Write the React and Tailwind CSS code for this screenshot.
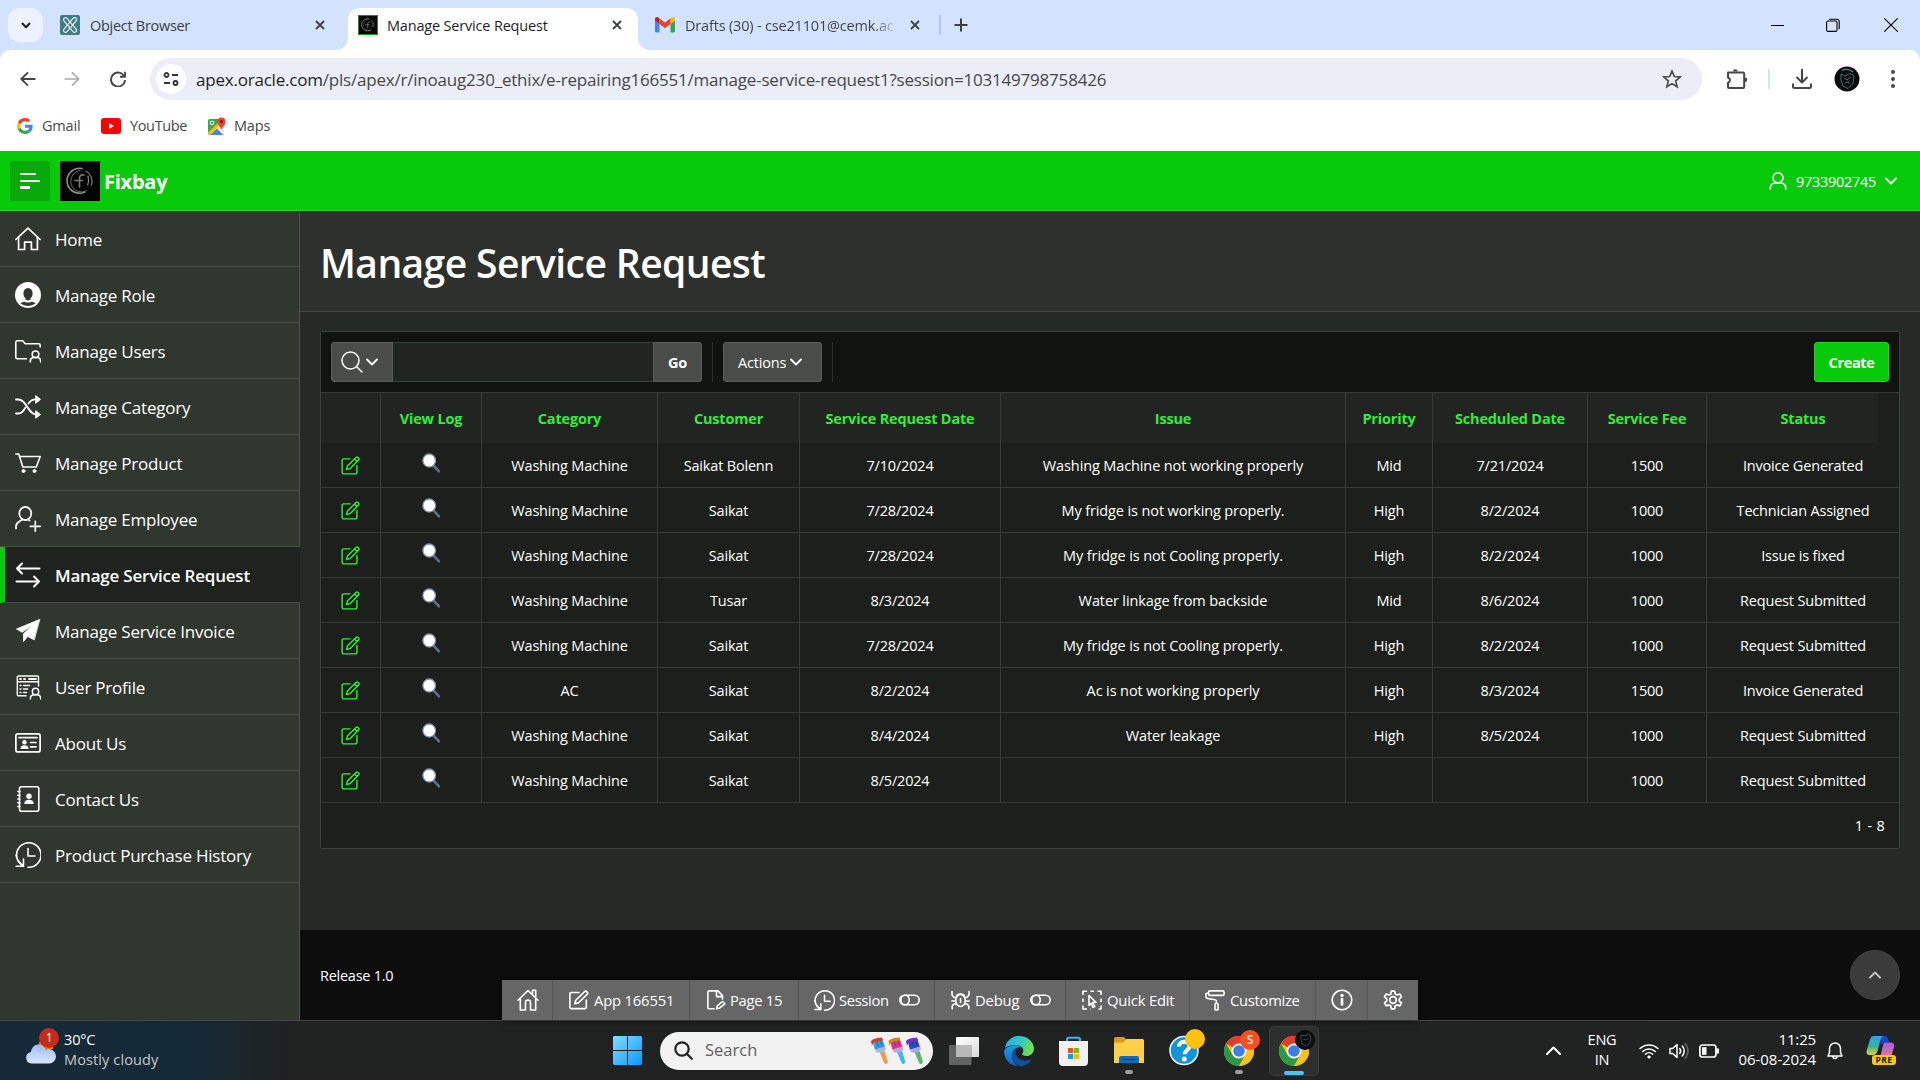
import React from 'react';

/* ---------- icon helper ---------- */
function Ico({ w = 24, h = w, vb, sw = 1.6, className = '', children }) {
  return (
    <svg
      width={w}
      height={h}
      viewBox={vb || `0 0 ${w} ${h}`}
      fill="none"
      stroke="currentColor"
      strokeWidth={sw}
      strokeLinecap="round"
      strokeLinejoin="round"
      className={`shrink-0 ${className}`}
    >
      {children}
    </svg>
  );
}

const Chevron = ({ className }) => (
  <Ico w={12} h={8} sw={1.8} className={className}><path d="M1 1.5l5 5 5-5" /></Ico>
);

/* ---------- sidebar icons, 26px box ---------- */
const navIcons = {
  home: (
    <Ico w={26} sw={1.7}>
      <path d="M.9 13.5L13 2.2l12.1 11.3" />
      <path d="M3.6 11.5V23.500h6V16.200h6.800v7.300h6v-12" />
    </Ico>
  ),
  role: (
    <Ico w={26}>
      <circle cx="13" cy="13" r="13" fill="currentColor" stroke="none" />
      <ellipse cx="13" cy="11.500" rx="4.600" ry="5.600" fill="#2f372e" stroke="none" />
      <path d="M10 16.500h6l.6 3.100 4.200 1.700a13 13 0 0 1-15.600 0l4.200-1.700z" fill="#2f372e" stroke="none" />
      <path d="M9 17.700c1 1.200 2.500 1.800 4 1.800s3-.6 4-1.800" stroke="#fff" strokeWidth="2.200" />
    </Ico>
  ),
  users: (
    <Ico w={26} sw={1.6}>
      <path d="M11.500 20.800H2.300a1.500 1.500 0 0 1-1.500-1.500V4.300a1.500 1.500 0 0 1 1.500-1.500h5.400l2.500 3h13.500a1.500 1.500 0 0 1 1.500 1.500V9" />
      <circle cx="20.500" cy="16.300" r="3.300" />
      <path d="M15.300 24v-1c0-1.800 1.500-3.300 3.300-3.500h3.800c1.800.2 3.300 1.700 3.300 3.500v1" />
    </Ico>
  ),
  category: (
    <Ico w={26} sw={1.8}>
      <path d="M1 5.500h2.500c8.500 0 9 15 18 15H23M1 19.500h2.500c3.500 0 5.300-3 7-6M13.500 9.500C15.300 7 17.300 5.400 20.500 5.400H23" />
      <path d="M21 1.800l4.500 3.600L21 9zM21 16.900l4.500 3.600L21 24z" fill="currentColor" strokeWidth="1" />
    </Ico>
  ),
  product: (
    <Ico w={26} sw={1.6}>
      <path d="M.8 4h3l4 13h13.500L25.200 6.500H4.700" />
      <circle cx="8.500" cy="21" r="1.500" fill="currentColor" strokeWidth="1" />
      <circle cx="19.500" cy="21" r="1.500" fill="currentColor" strokeWidth="1" />
    </Ico>
  ),
  employee: (
    <Ico w={26} sw={1.7}>
      <ellipse cx="10.300" cy="7.500" rx="6" ry="6.600" />
      <path d="M1 22.500v-2.200c0-2.900 2.300-4.200 6.300-6.800M13 13.600l1.500.9M20.300 15.300v10M15.300 20.300h10" />
    </Ico>
  ),
  request: (
    <Ico w={26} sw={2}>
      <path d="M24.500 6.500H2M7 1.500l-5 5 5 5M1.500 19.500H24M19 14.500l5 5-5 5" />
    </Ico>
  ),
  invoice: (
    <Ico w={26}>
      <path d="M24.500 1.500L1.500 11l5.700 3.300L18 6.500l-9.500 9.300V23.500l4.200-5 6.300 3.200z" fill="currentColor" stroke="currentColor" strokeWidth=".8" />
    </Ico>
  ),
  profile: (
    <Ico w={26} sw={1.4}>
      <path d="M11 21.800H3.300a1 1 0 0 1-1-1V3a1 1 0 0 1 1-1h19.200a1 1 0 0 1 1 1v9M2.500 7.800h21" />
      <path d="M5 5h1M9 5h1M14 5h7" strokeWidth="1.800" />
      <path d="M5 11.500h1M5 15h1M5 18.500h1M8.500 11.500h6M8.500 15h4M8.500 18.500h3" />
      <circle cx="20.500" cy="17.500" r="3.200" />
      <path d="M15.400 25v-1c0-1.700 1.400-3.100 3.200-3.300h3.800c1.800.2 3.200 1.600 3.200 3.300v1" />
    </Ico>
  ),
  about: (
    <Ico w={26} sw={1.7}>
      <rect x=".9" y="3.900" width="24.200" height="18" rx="2" />
      <path d="M4 7.600h18" />
      <circle cx="9.500" cy="12.300" r="2.200" fill="currentColor" stroke="none" />
      <path d="M5.500 19c0-3 1.500-3.800 4-3.800s4 .8 4 3.800z" fill="currentColor" stroke="none" />
      <path d="M15.500 12.500h5.500M15.500 16.800h5.500" />
    </Ico>
  ),
  contact: (
    <Ico w={26} sw={1.6}>
      <rect x="4.500" y=".8" width="19.300" height="24.400" rx="2" />
      <path d="M2.800 5.500h2M2.800 9.200h2M2.800 13h2M2.800 16.800h2M2.800 20.500h2" />
      <circle cx="14" cy="10.300" r="2.700" fill="currentColor" stroke="none" />
      <path d="M9.300 18c0-3 1.800-4.200 4.700-4.200s4.700 1.200 4.700 4.200z" fill="currentColor" stroke="none" />
    </Ico>
  ),
  history: (
    <Ico w={26} sw={1.6}>
      <path d="M6.500 22.800A12.200 12.200 0 1 1 13 25.200M13 6.500V14h7M8.500 17v7.200H1.200M8 23.500C3 20 1.500 16 1 13" />
    </Ico>
  ),
};

const navItems = [
  ['home', 'Home'],
  ['role', 'Manage Role'],
  ['users', 'Manage Users'],
  ['category', 'Manage Category'],
  ['product', 'Manage Product'],
  ['employee', 'Manage Employee'],
  ['request', 'Manage Service Request'],
  ['invoice', 'Manage Service Invoice'],
  ['profile', 'User Profile'],
  ['about', 'About Us'],
  ['contact', 'Contact Us'],
  ['history', 'Product Purchase History'],
];

/* ---------- browser chrome ---------- */
const CloseX = () => (
  <Ico w={10} sw={1.8} className="text-[#3c4043]"><path d="M1 1l8 8M9 1l-8 8" strokeLinecap="butt" /></Ico>
);

function FixLogo({ size, frame }) {
  return (
    <svg width={size} height={size} viewBox="0 0 40 40" className="shrink-0">
      <rect width="40" height="40" fill="#020302" />
      {frame && <rect x="1" y="1" width="38" height="38" fill="none" stroke="#1c8f1c" strokeWidth="2" />}
      <g fill="none" stroke="#8b9a80" strokeLinecap="round">
        <path d="M22 7.500A12.500 12.500 0 1 0 25 31" strokeWidth="1.500" />
        <path d="M20 9.500A10.800 10.800 0 1 0 27 29.500" strokeWidth="1" stroke="#65745c" />
        <path d="M26 10A12 12 0 0 1 31.500 24" strokeWidth="1.400" stroke="#66775b" />
        <path d="M28 15c.8 3 .8 6-.3 9" strokeWidth="1.100" />
        <path d="M24 14c-3-.6-4.500.5-4.500 3.500V26M15 19.500h7.500" strokeWidth="1.700" stroke="#6c8062" />
      </g>
    </svg>
  );
}

const GmailIcon = () => (
  <svg width="20" height="16" viewBox="0 0 20 16" className="shrink-0">
    <path d="M0 2.500v11.800c0 .7.600 1.200 1.300 1.200h3.200V7z" fill="#4285f4" />
    <path d="M20 2.500v11.800c0 .7-.6 1.200-1.300 1.200h-3.200V7z" fill="#34a853" />
    <path d="M15.500 1.500V7L20 3.800V2.200C20 .3 18-.6 16.500.6z" fill="#fbbc04" />
    <path d="M4.500 7V1.400L10 5.500l5.500-4.100V7L10 11.200z" fill="#ea4335" />
    <path d="M0 2.200v1.600L4.500 7V1.400L3.500.6C2-.6 0 .3 0 2.200z" fill="#c5221f" />
  </svg>
);

function TabStrip() {
  return (
    <div className="flex h-[50px] items-start bg-[#d3e3fd] text-[14.5px] text-[#3c4043]">
      <div className="mt-2 ml-2 flex h-[34px] w-[35px] items-center justify-center rounded-xl bg-[#ecf3fe] text-[#1f1f1f]">
        <Ico w={10} h={7} sw={2}><path d="M1 1l4 4.300L9 1" strokeLinecap="butt" /></Ico>
      </div>
      <div className="flex h-[50px] w-[305px] items-center pl-[17px]">
        <svg width="20" height="20" viewBox="0 0 20 20" className="shrink-0">
          <rect width="20" height="20" rx="2" fill="#427c83" />
          <g fill="none" stroke="#e4f0f0" strokeWidth="1.200">
            <rect x="8" y="1" width="4" height="18" rx="2" transform="rotate(40 10 10)" />
            <rect x="8" y="1" width="4" height="18" rx="2" transform="rotate(-40 10 10)" />
          </g>
        </svg>
        <span className="ml-[10px] w-[225px] pt-[2px] tracking-[-0.02em]!">Object Browser</span>
        <CloseX />
      </div>
      <div className="relative mt-2 flex h-[42px] w-[290px] items-center rounded-t-[12px] bg-white pb-2 pl-[10px] text-[#1f1f1f]">
        <svg width="12" height="12" className="absolute bottom-0 -left-3"><path d="M12 0v12H0A12 12 0 0 0 12 0z" fill="#fff" /></svg>
        <svg width="12" height="12" className="absolute -right-3 bottom-0"><path d="M0 0v12h12A12 12 0 0 1 0 0z" fill="#fff" /></svg>
        <FixLogo size={20} frame />
        <span className="ml-[9px] w-[225px] pt-[2px]">Manage Service Request</span>
        <CloseX />
      </div>
      <div className="flex h-[50px] grow items-center pl-[17px]">
        <GmailIcon />
        <span className="ml-[10px] w-[210px] bg-[linear-gradient(to_right,#3c4043_90%,#c3d3ec)] bg-clip-text pt-[2px] whitespace-nowrap text-transparent">Drafts (30) - cse21101@cemk.ac</span>
        <span className="ml-[15px]"><CloseX /></span>
        <span className="ml-[19px] h-5 w-[2px] bg-[#a8c7fa]" />
        <Ico w={14} sw={2} className="ml-[13px]"><path d="M7 .5v13M.5 7h13" strokeLinecap="butt" /></Ico>
      </div>
      <div className="flex h-[50px] w-[149px] items-center text-black">
        <span className="h-px w-[13px] bg-black" />
        <Ico w={14} sw={1.1} className="ml-[42px]">
          <rect x=".6" y="3" width="10.400" height="10.400" rx="1.500" />
          <path d="M3.500 1.200h7.500a2.200 2.200 0 0 1 2.200 2.200v7.400" />
        </Ico>
        <Ico w={14} sw={1.1} className="ml-[44px]"><path d="M.6.600l12.800 12.800M13.400.600L.6 13.400" /></Ico>
      </div>
    </div>
  );
}

function UrlBar() {
  return (
    <div className="bg-[#d3e3fd]">
      <div className="flex h-[58px] items-center rounded-t-[10px] bg-white text-[#474747]">
        <Ico w={16} sw={1.9} className="ml-5"><path d="M15.500 8H1.500M8 1.300L1.300 8 8 14.700" strokeLinecap="butt" /></Ico>
        <Ico w={16} sw={1.7} className="ml-7 text-[#a9a9a9]"><path d="M.5 8h14M8 1.300L14.700 8 8 14.700" strokeLinecap="butt" /></Ico>
        <Ico w={16} sw={1.9} className="ml-[30px]"><path d="M14.300 5.500A7 7 0 1 0 15 9M15 .8v5h-5" strokeLinecap="butt" /></Ico>
        <div className="ml-[24px] flex h-[42px] w-[1552px] items-center rounded-full bg-[#ebeef7] pl-[6px] text-[#474747]">
          <div className="flex size-[30px] items-center justify-center rounded-full bg-white">
            <Ico w={16} h={14} sw={1.8} className="text-[#333]">
              <circle cx="3.500" cy="3" r="2" /><path d="M9 3h6M1 11h6" strokeLinecap="butt" /><circle cx="12.500" cy="11" r="2" />
            </Ico>
          </div>
          <span className="ml-[10px] grow pt-[2px] text-[17px] tracking-[-0.012em]!">
            <span className="text-[#1f1f1f]">apex.oracle.com</span>/pls/apex/r/inoaug230_ethix/e-repairing166551/manage-service-request1?session=103149798758426
          </span>
          <Ico w={20} sw={1.6} className="mr-[20px]">
            <path d="M10 2l2.300 5.500 5.900.5-4.500 3.900 1.400 5.800L10 14.600l-5.100 3.100 1.400-5.800L1.800 8l5.900-.5z" strokeLinejoin="miter" />
          </Ico>
        </div>
        <Ico w={22} sw={2} className="ml-[24px]">
          <path d="M2 4.500h5.500M11.500 4.500H17a1.200 1.200 0 0 1 1.200 1.200V19a1 1 0 0 1-1 1H3a1 1 0 0 1-1-1v-4.200l1-.7a2.500 2.500 0 0 0 0-4l-1-.7V5.500a1 1 0 0 1 1-1z" />
          <path d="M7 3.600a2.300 2.300 0 0 1 4.600 0zM19 9.500a2.300 2.300 0 0 1 0 4.600z" fill="currentColor" stroke="none" />
        </Ico>
        <span className="ml-[20px] h-5 w-[2px] bg-[#d3e3fd]" />
        <Ico w={20} sw={2} className="ml-[22px]"><path d="M10 0v12.500M4.500 8l5.500 5.500L15.500 8M1 14.500v3A1.500 1.500 0 0 0 2.500 19h15a1.500 1.500 0 0 0 1.500-1.500v-3" strokeLinecap="butt" /></Ico>
        <svg width="26" height="26" viewBox="0 0 26 26" className="ml-[22px]">
          <circle cx="13" cy="13" r="12.500" fill="#0b0c0e" />
          <path d="M8 4.500c3-2 8-1.500 11 1.500" stroke="#2b9aa0" strokeWidth="1.300" fill="none" />
          <path d="M7 8l4 2 5-2.500 4 2-1 8-5 5-5-2.500L7 14zM10 12l3 2 4-3M11 17l3-1 2 2" stroke="#4b6b74" strokeWidth="1" fill="none" />
        </svg>
        <svg width="4" height="18" className="ml-[31px]" fill="#474747"><circle cx="2" cy="2" r="2" /><circle cx="2" cy="9" r="2" /><circle cx="2" cy="16" r="2" /></svg>
      </div>
    </div>
  );
}

function Bookmarks() {
  return (
    <div className="flex h-[43px] items-center bg-white pb-[7px] text-[14.5px] text-[#474747]">
      <svg width="16" height="16" viewBox="0 0 48 48" className="ml-[17px]">
        <path fill="#EA4335" d="M24 9.500c3.540 0 6.710 1.220 9.210 3.600l6.850-6.850C35.900 2.380 30.470 0 24 0 14.620 0 6.510 5.380 2.560 13.220l7.980 6.190C12.430 13.720 17.740 9.500 24 9.500z" />
        <path fill="#4285F4" d="M46.980 24.550c0-1.570-.15-3.090-.38-4.550H24v9.020h12.940c-.58 2.960-2.260 5.480-4.780 7.180l7.730 6c4.510-4.180 7.090-10.360 7.090-17.650z" />
        <path fill="#FBBC05" d="M10.530 28.590c-.48-1.450-.76-2.990-.76-4.590s.27-3.140.76-4.590l-7.980-6.190C.92 16.460 0 20.120 0 24c0 3.880.92 7.540 2.560 10.780l7.970-6.190z" />
        <path fill="#34A853" d="M24 48c6.480 0 11.930-2.130 15.890-5.810l-7.730-6c-2.150 1.450-4.920 2.300-8.160 2.300-6.260 0-11.570-4.220-13.470-9.910l-7.980 6.190C6.510 42.620 14.620 48 24 48z" />
      </svg>
      <span className="ml-[9px] w-[59px]">Gmail</span>
      <svg width="20" height="16" viewBox="0 0 20 16"><rect width="20" height="16" rx="3" fill="#f00" /><path d="M8 5l5 3-5 3z" fill="#fff" /></svg>
      <span className="ml-[9px] w-[78px] tracking-[-0.025em]!">YouTube</span>
      <svg width="19" height="19" viewBox="0 0 19 19">
        <rect x="0" y="2" width="16" height="16" rx="2" fill="#34a853" />
        <path d="M0 18L16 3v13a2 2 0 0 1-2 2z" fill="#e8eaed" />
        <path d="M2 18l7-6.500 6 6.500z" fill="#4285f4" />
        <path d="M0 15.500L13 3l2 2L2 18H0z" fill="#fbbc04" />
        <circle cx="4" cy="6" r="1.800" fill="none" stroke="#fff" />
        <path d="M13.500 13c-.5-3-4-4.500-4-8.500a4 4 0 0 1 8 0c0 4-3.500 5.500-4 8.500z" fill="#ea4335" />
        <circle cx="13.500" cy="4.500" r="1.500" fill="#7e1c14" />
      </svg>
      <span className="ml-[7px]">Maps</span>
    </div>
  );
}

/* ---------- application ---------- */
function AppHeader() {
  return (
    <header className="flex h-[60px] items-center border-b border-[#2bd02e] bg-[#06ca0a] text-white">
      <div className="ml-[10px] flex size-10 items-center justify-center rounded-[3px] bg-[#09a90c]">
        <Ico w={20} h={16} sw={2}><path d="M0 1h16M0 8h20" strokeLinecap="butt" /><path d="M0 14.500h10" strokeWidth="3" strokeLinecap="butt" /></Ico>
      </div>
      <div className="ml-[10px]"><FixLogo size={40} /></div>
      <span className="ml-[4px] grow pt-[3px] text-[20px] font-bold">Fixbay</span>
      <Ico w={18} h={19} sw={1.600}><circle cx="9" cy="6.800" r="5" /><path d="M1.300 18v-1.200c0-2.500 2-4.300 4.500-4.800h6.400c2.500.5 4.500 2.300 4.500 4.800V18" /></Ico>
      <span className="ml-[9px] w-[80px] pt-[2px] text-[14.500px] tracking-[-0.02em]! whitespace-nowrap">9733902745</span>
      <Chevron className="mr-[23px] ml-[9px]" />
    </header>
  );
}

function Sidebar() {
  return (
    <nav className="w-[300px] shrink-0 border-r border-[#4a524a] bg-[#2f372e] text-[17px] text-white">
      {navItems.map(([icon, label]) => {
        const active = icon === 'request';
        return (
          <div
            key={icon}
            className={
              active
                ? '-mr-px flex h-14 items-center border-b border-l-[5px] border-b-[#464d46] border-l-[#06ca0a] bg-[#1e231f] pl-[9.5px] font-semibold'
                : 'flex h-14 items-center border-b border-[#464d46] pl-[14.5px]'
            }
          >
            {navIcons[icon]}
            <span className="ml-[14.5px] pt-[3px] whitespace-nowrap">{label}</span>
          </div>
        );
      })}
    </nav>
  );
}

const columns = [
  ['', 60], ['View Log', 101], ['Category', 176], ['Customer', 142], ['Service Request Date', 201],
  ['Issue', 345], ['Priority', 87], ['Scheduled Date', 155], ['Service Fee', 119], ['Status', 192],
];
const WM = 'Washing Machine';
const rows = [
  [WM, 'Saikat Bolenn', '7/10/2024', 'Washing Machine not working properly', 'Mid', '7/21/2024', '1500', 'Invoice Generated'],
  [WM, 'Saikat', '7/28/2024', 'My fridge is not working properly.', 'High', '8/2/2024', '1000', 'Technician Assigned'],
  [WM, 'Saikat', '7/28/2024', 'My fridge is not Cooling properly.', 'High', '8/2/2024', '1000', 'Issue is fixed'],
  [WM, 'Tusar', '8/3/2024', 'Water linkage from backside', 'Mid', '8/6/2024', '1000', 'Request Submitted'],
  [WM, 'Saikat', '7/28/2024', 'My fridge is not Cooling properly.', 'High', '8/2/2024', '1000', 'Request Submitted'],
  ['AC', 'Saikat', '8/2/2024', 'Ac is not working properly', 'High', '8/3/2024', '1500', 'Invoice Generated'],
  [WM, 'Saikat', '8/4/2024', 'Water leakage', 'High', '8/5/2024', '1000', 'Request Submitted'],
  [WM, 'Saikat', '8/5/2024', '', '', '', '1000', 'Request Submitted'],
];

const EditIcon = () => (
  <Ico w={19} vb="0 0 20 20" sw={1.5} className="mx-auto text-[#2ff035]">
    <path d="M9.500 3H2.800A1.600 1.600 0 0 0 1.200 4.600v12.600a1.600 1.600 0 0 0 1.600 1.600h12.400a1.600 1.600 0 0 0 1.600-1.600V10" />
    <path d="M5.800 14.200l1-3.600 9-9a1.500 1.500 0 0 1 2.100 0l.6.600a1.500 1.500 0 0 1 0 2.100l-9 9zM14.300 3.200l2.600 2.600" />
  </Ico>
);
const LensIcon = () => (
  <svg width="18" height="20" viewBox="0 0 18 20" className="mx-auto -mt-[4px]">
    <path d="M11 12l6 6.300" stroke="#5f6f86" strokeWidth="2.600" strokeLinecap="round" />
    <ellipse cx="7.200" cy="7.500" rx="6.300" ry="6.500" fill="#fdfeff" stroke="#8697ad" strokeWidth="1.300" />
  </svg>
);

function ReportToolbar() {
  return (
    <div className="flex h-[60px] items-center bg-[#111310] px-[10px] text-[14.5px] text-white">
      <div className="flex h-10 w-[62px] items-center rounded-l-[3px] border border-[#5b5d5a] bg-[#4a4c49] pl-[9px]">
        <Ico w={22} sw={1.5}><circle cx="9.500" cy="9.500" r="8.500" /><path d="M15.700 15.700l5.300 5.300" /></Ico>
        <Chevron className="ml-[3px]" />
      </div>
      <div className="h-10 w-[260px] border-y border-[#3d413d] bg-[#212521]" />
      <div className="flex h-10 w-[49px] items-center justify-center rounded-r-[3px] border border-[#5b5d5a] bg-[#4a4c49] pt-[2px] font-bold">Go</div>
      <span className="ml-[10px] h-10 w-px bg-[#2c2e2b]" />
      <div className="ml-[10px] flex h-10 w-[99px] items-center rounded-[3px] border border-[#5b5d5a] bg-[#4a4c49] pl-[14px]">
        <span className="pt-[2px]">Actions</span><Chevron className="ml-[4px]" />
      </div>
      <span className="ml-[10px] h-10 w-px bg-[#2c2e2b]" />
      <div className="ml-auto flex h-10 w-[75px] items-center justify-center rounded-[3px] border border-[#25d029] bg-[#06ca0a] pt-[2px] font-bold tracking-[-0.025em]!">Create</div>
    </div>
  );
}

function Report() {
  return (
    <section className="mx-5 mt-[19px] rounded-[2px] border border-[#3c403c] bg-[#1d1f1c] text-[14.5px] text-white">
      <ReportToolbar />
      <table className="w-full table-fixed border-separate border-spacing-0 border-t border-[#363a36] text-center">
        <colgroup>{columns.map(([c, w]) => <col key={w} style={{ width: w }} />)}</colgroup>
        <thead>
          <tr className="h-[50px] text-[#2ff035]">
            {columns.map(([c], i) => (
              <th
                key={i}
                className={
                  i === 9
                    ? 'bg-[linear-gradient(to_right,#222421_171px,transparent_171px)] p-0 pt-[2px] font-bold'
                    : 'border-r border-[#373a36] bg-[#222421] p-0 pt-[2px] font-bold whitespace-nowrap'
                }
              >
                {c}
              </th>
            ))}
          </tr>
        </thead>
        <tbody>
          {rows.map((r, ri) => (
            <tr key={ri} className="h-[45px]">
              <td className="border-r border-b border-[#373a36] p-0 pr-px"><EditIcon /></td>
              <td className="border-r border-b border-[#373a36] p-0"><LensIcon /></td>
              {r.map((c, i) => (
                <td
                  key={i}
                  className={
                    i === 3
                      ? 'border-r border-b border-[#373a36] p-0 pt-[2px] tracking-[-0.008em]! whitespace-nowrap'
                      : 'border-r border-b border-[#373a36] p-0 pt-[2px] whitespace-nowrap last:border-r-0'
                  }
                >
                  {c}
                </td>
              ))}
            </tr>
          ))}
        </tbody>
      </table>
      <div className="flex h-[45px] items-center justify-end pr-[14px]">
        <span className="tracking-[0.02em]!">1 - 8</span>
      </div>
    </section>
  );
}

const Toggle = () => (
  <Ico w={21} h={12} sw={1.6} className="ml-auto"><rect x=".8" y="1.200" width="19.400" height="9.600" rx="4.800" /><ellipse cx="6" cy="6" rx="4.200" ry="4.800" /></Ico>
);

function DevToolbar() {
  const cell = 'flex h-10 items-center border-r border-[#575757] whitespace-nowrap';
  return (
    <div className="absolute bottom-0 left-[202px] flex h-10 bg-[#666] text-[14.8px] text-white shadow-[0_0_8px_rgba(0,0,0,0.6)]">
      <div className={`${cell} w-[51px] pl-[14.5px]`}>
        <Ico w={22}><path d="M1 11.300L11 1.500l10 9.800M3.300 10v11h5.200v-7.500a2.500 2.500 0 0 1 5 0V21h5.200V10M15.500 5V1.300h3.200V8" /></Ico>
      </div>
      <div className={`${cell} w-[137px] pl-[16px]`}>
        <Ico w={20}><path d="M10 2.500H2.200A1.300 1.300 0 0 0 .9 3.800v13.500a1.300 1.300 0 0 0 1.300 1.300H16a1.300 1.300 0 0 0 1.300-1.300V10" /><path d="M5.800 13.800l1-3.600 8.800-8.600a1.500 1.500 0 0 1 2.100 0l.5.500a1.500 1.500 0 0 1 0 2.100l-8.800 8.700z" /></Ico>
        <span className="ml-[5px]">App 166551</span>
      </div>
      <div className={`${cell} w-[109px] pl-[17px]`}>
        <Ico w={19} h={20}><path d="M7 18.800H2.200a1.300 1.300 0 0 1-1.300-1.300V2.200A1.300 1.300 0 0 1 2.200.9H11l4.500 4.700V9M9.500 1v5.600h5.700" /><path d="M9.500 18.800l.8-3 5.200-4.300 2.300 2.300-5.300 4.400z" /></Ico>
        <span className="ml-[4px] tracking-[-0.02em]!">Page 15</span>
      </div>
      <div className={`${cell} w-[136px] pr-[14px] pl-[15px]`}>
        <Ico w={21} vb="0 0 26 26" sw={1.9}><path d="M6.500 22.800A12 12 0 1 1 13 25M13 6.500V14h7M8.500 17v7.200H1.200M8 23.500C3 20 1.500 16 1 13" /></Ico>
        <span className="ml-[4px] tracking-[-0.025em]!">Session</span>
        <Toggle />
      </div>
      <div className={`${cell} w-[131px] pr-[14px] pl-[16px]`}>
        <Ico w={19} h={20}>
          <ellipse cx="9.500" cy="10.500" rx="4.800" ry="6" />
          <path d="M5.500 6.800C5.500 3 13.500 3 13.500 6.800M9.500 8.500v4M5 7.500H3.200L1 5V1.500M14 7.500h1.800L18 5V1.500M4.600 11H.8M14.400 11h3.800M5.300 14H3l-1.800 2v2.800M13.700 14H16l1.800 2v2.800" />
        </Ico>
        <span className="ml-[5px]">Debug</span>
        <Toggle />
      </div>
      <div className={`${cell} w-[124px] pl-[16px]`}>
        <Ico w={20}>
          <path d="M1 5V1.200h4M8.500 1.200h3.500M15.500 1.200H19V5M1 8.500V12M1 15.500V19h4M19 8.500V12M19 15.500V19h-2.500M8.500 19H9" strokeLinecap="butt" />
          <path d="M7 5.500l7 6.800h-3.200l2 4.200-1.800.8-1.800-4L7 15.500z" />
        </Ico>
        <span className="ml-[5px]">Quick Edit</span>
      </div>
      <div className={`${cell} w-[126px] pl-[15px]`}>
        <Ico w={20} h={21}><rect x="3.500" y=".9" width="15.600" height="4.500" rx="1.500" /><path d="M3.500 3.200H2A1.200 1.200 0 0 0 .9 4.500v2.200c0 1 .5 1.500 1.500 1.700l7.600 1.400c.9.200 1.400.7 1.400 1.600v1.600" /><rect x="10" y="13.500" width="3" height="6.500" rx=".8" /></Ico>
        <span className="ml-[5px] tracking-[-0.02em]!">Customize</span>
      </div>
      <div className={`${cell} w-[52px] justify-center`}>
        <Ico w={22}><circle cx="11" cy="11" r="9.800" /><path d="M11 10v5.500" strokeWidth="2.600" /><circle cx="11" cy="6.500" r=".9" fill="currentColor" /></Ico>
      </div>
      <div className="flex h-10 w-[50px] items-center justify-center">
        <Ico w={22} vb="1 1 22 22" sw={1.7}>
          <path d="M10.300 2.500h3.400l.5 2.800 1.900 1.100 2.700-1 1.700 2.900-2.200 1.900v2.300l2.200 1.900-1.700 2.900-2.700-1-1.900 1.100-.5 2.800h-3.400l-.5-2.800-1.900-1.100-2.700 1-1.700-2.900 2.200-1.900v-2.300L3.500 8.300l1.700-2.900 2.700 1 1.900-1.100z" transform="translate(0 .6)" />
          <circle cx="12" cy="12" r="3.300" />
        </Ico>
      </div>
    </div>
  );
}

function Main() {
  return (
    <main className="relative flex grow flex-col bg-[#252a26]">
      <div className="flex h-[101px] items-center border-b border-[#424642] bg-[#2d302c] pl-5">
        <h1 className="pt-[4px] text-[39px] font-semibold tracking-[-0.015em]! text-white">Manage Service Request</h1>
      </div>
      <Report />
      <footer className="mt-auto flex h-[90px] items-center justify-between bg-[#0d0d0d] pr-5 pl-5 text-[14.5px] text-white">
        <span className="pt-px tracking-[-0.018em]!">Release 1.0</span>
        <span className="flex size-[50px] items-center justify-center rounded-full border border-[#454545] bg-[#3b3b3b] text-[#c4c4c4]">
          <Ico w={12} h={8} sw={1.8}><path d="M1 6.500l5-5 5 5" /></Ico>
        </span>
      </footer>
      <DevToolbar />
    </main>
  );
}

/* ---------- Windows taskbar ---------- */
const Chrome = () => (
  <svg width="30" height="30" viewBox="0 0 30 30">
    <circle cx="15" cy="15" r="15" fill="#fbc116" />
    <path d="M15 15L2 7.500A15 15 0 0 1 28 7.500H15z" fill="#e33b2e" />
    <path d="M2 7.500A15 15 0 0 0 15 30l6.500-11.300L15 15 8.500 18.700z" fill="#2a9a47" />
    <path d="M15 7.500h13A15 15 0 0 1 15 30l6.500-11.300z" fill="#fbc116" />
    <circle cx="15" cy="15" r="7.500" fill="#fff" />
    <circle cx="15" cy="15" r="5.800" fill="#3b7ded" />
  </svg>
);

const brush = (x, tip, band, handle, drip) => (
  <g transform={`translate(${x} 0)`}>
    <path d="M8.500 15l5-1 3.300 10.500a2 2 0 0 1-3.600 1.500z" fill={handle} />
    <path d="M1.500 3.500L11 1l3 9-10 3z" fill={tip} />
    <path d="M4 12.500L14 9.500l.8 3.200L11 15.500l-5.500 0z" fill={band} />
    <path d="M0 4C3 1 7 1 11 .5l.8 2.700L2.500 5.500 1 9z" fill={drip} />
    <path d="M6 4.500l1.500 5M9.500 3.500l1.500 5" stroke="#1b2a6b" strokeOpacity=".5" strokeWidth=".9" />
  </g>
);

function Taskbar() {
  return (
    <div className="flex h-[60px] items-center border-t border-[#434546] bg-[linear-gradient(to_right,#172937_0px,#142a38_190px,#202222_285px,#212222_100%)] text-white">
      <div className="relative ml-[25px] h-[60px] w-[39px]">
        <svg width="32" height="22" viewBox="0 0 32 22" className="absolute top-[21px] left-0">
          <defs><linearGradient id="cloud" x1="0" y1="0" x2="0" y2="1"><stop offset="0" stopColor="#9dbcf5" /><stop offset="1" stopColor="#dbe8fb" /></linearGradient></defs>
          <path d="M14 0h14v7H14z" fill="#f57c14" />
          <path d="M6.500 21.500a5.800 5.800 0 0 1-.5-11.500C6.500 5 10 2.500 13.500 2.500c3.300 0 6 2 7 5 1-.5 2-.7 3-.5a7.200 7.200 0 0 1 .5 14.500z" fill="url(#cloud)" />
        </svg>
        <span className="absolute top-[7px] left-[14px] flex size-5 items-center justify-center rounded-full bg-[#c42b1c] text-[12px]">1</span>
      </div>
      <div className="w-[549px] pb-[2px] text-[14.500px] leading-5">
        <div className="tracking-[-0.01em]!">30°C</div>
        <div className="tracking-[0.008em]! text-[#c6c9cb]">Mostly cloudy</div>
      </div>
      <svg width="29" height="29" viewBox="0 0 29 29">
        <defs><linearGradient id="win" x1="0" y1="0" x2="1" y2="1"><stop offset="0" stopColor="#84dcff" /><stop offset="1" stopColor="#0a98fb" /></linearGradient></defs>
        <path d="M1 0h13v14H0V1zM15 0h13l1 1v13H15zM0 15h14v14H1l-1-1zM15 15h14v13l-1 1H15z" fill="url(#win)" />
      </svg>
      <div className="ml-[18px] flex h-[38px] w-[273px] items-center rounded-full bg-[#f2f2f2] pl-[14px]">
        <Ico w={19} sw={2.2} className="text-[#222]"><circle cx="8" cy="8" r="6.700" /><path d="M12.800 12.800l5 5" /></Ico>
        <span className="ml-[12px] w-[166px] text-[16.500px] tracking-[0]! text-[#5f5f5f]">Search</span>
        <svg width="54" height="28" viewBox="0 0 54 28">
          {brush(0, '#2a9fe0', '#a9b6f2', '#f2994a', '#d93a2b')}
          {brush(17.5, '#e0348c', '#b9a6ee', '#3fb8ee', '#c98a1a')}
          {brush(35, '#2150bb', '#a9a6ee', '#58b86a', '#7a2fc0')}
        </svg>
      </div>
      <svg width="31" height="28" viewBox="0 0 31 28" className="ml-[16px]">
        <defs><linearGradient id="tv" x1="0" y1="0" x2="1" y2="1"><stop offset="0" stopColor="#fff" /><stop offset="1" stopColor="#dadada" /></linearGradient></defs>
        <rect x="7" y="0" width="23" height="20" rx="1" fill="url(#tv)" />
        <rect x="0" y="8" width="22.500" height="20" rx="1" fill="#6f6f6f" fillOpacity=".85" />
        <rect x="7" y="8" width="15.500" height="12" fill="#b9b9b9" />
      </svg>
      <svg width="30" height="30" viewBox="0 0 30 30" className="ml-[24px]">
        <defs>
          <linearGradient id="eg1" x1="0" y1="0" x2="1" y2=".3"><stop offset="0" stopColor="#2aa9ea" /><stop offset=".6" stopColor="#36c8c0" /><stop offset="1" stopColor="#6fe04a" /></linearGradient>
          <linearGradient id="eg2" x1="0" y1="0" x2="0" y2="1"><stop offset="0" stopColor="#1b9de2" /><stop offset="1" stopColor="#0a62c9" /></linearGradient>
        </defs>
        <path d="M1 12C2 5 8 0 15 0c9 0 15 6.500 15 12.500 0 5-4 7.500-7.500 7.500-3 0-4.500-1-4.500-1.700 0-.8 1.300-1.300 1.300-3.600 0-3-3-5.700-7-5.700C7 9 3 10 1 12z" fill="url(#eg1)" />
        <path d="M12.500 9C6 9 .3 12 .1 15.500.1 23 6 30 14 30c-4-2-6-6-6-10 0-4.500 2-6.500 4.500-8 1.300-.8 3.300-1.200 4.800-.3-.8-1.500-2.500-2.700-4.800-2.700z" fill="url(#eg2)" />
        <path d="M12 13c-2.500 1.500-4 4-4 7 0 5 4 10 9 10 4 0 8-2.500 10.300-6 .4-.7-.2-1-.8-.7-1.500.8-3.300 1.200-5 1.200-6 0-10-4-10-8.500 0-1 .2-2.200.5-3z" fill="#124e9c" />
      </svg>
      <svg width="29" height="30" viewBox="0 0 29 30" className="ml-[25px]">
        <path d="M8 6V3.200C8 2 9 1.700 9.500 1.700h10c.5 0 1.500.3 1.500 1.500V6" stroke="#37b5f5" strokeWidth="2" fill="none" />
        <path d="M0 5h29v21a4 4 0 0 1-4 4H4a4 4 0 0 1-4-4z" fill="#f1f1f2" />
        <path d="M9 12h5v5H9z" fill="#f25022" /><path d="M15 12h5v5h-5z" fill="#7fba00" /><path d="M9 18h5v5H9z" fill="#00a4ef" /><path d="M15 18h5v5h-5z" fill="#ffb900" />
      </svg>
      <div className="relative ml-[26px] flex h-[60px] w-[30px] items-center">
        <svg width="30" height="27" viewBox="0 0 30 27">
          <path d="M0 1.500A1.500 1.500 0 0 1 1.500 0H10l3 3.500L10 6H0z" fill="#d99a0c" />
          <path d="M0 5.500h9L12.500 2H28.500A1.500 1.500 0 0 1 30 3.500V26H0z" fill="#ffcf48" />
          <path d="M5 26v-5a2 2 0 0 1 2-2h16a2 2 0 0 1 2 2v5z" fill="#0f6cbd" /><path d="M8.500 22.500h13" stroke="#083f77" strokeWidth="1.200" />
        </svg>
        <span className="absolute top-[49px] left-[11px] h-1 w-2 rounded-full bg-[#9a9a9a]" />
      </div>
      <svg width="37" height="37" viewBox="0 0 37 37" className="mb-[6px] ml-[25px]">
        <circle cx="15" cy="21.500" r="14" fill="#1194d8" stroke="#e8f4fa" strokeWidth="1.600" />
        <path d="M10 17.500c0-3 2.300-4.800 5.200-4.800s5.300 1.700 5.300 4.500c0 4-5 4-5 8" fill="none" stroke="#fff" strokeWidth="4" />
        <circle cx="15.300" cy="30" r="2.500" fill="#fff" />
        <circle cx="26" cy="10" r="10" fill="#ffc20e" />
      </svg>
      <div className="relative ml-[18px] flex h-[60px] w-[30px] items-center">
        <Chrome />
        <span className="absolute top-[9px] left-[16px] flex size-5 items-center justify-center rounded-full bg-[#f4511e] text-[12px] font-semibold text-[#ffe3da]">S</span>
        <span className="absolute top-[49px] left-[11px] h-1 w-2 rounded-full bg-[#9a9a9a]" />
      </div>
      <div className="relative ml-[15px] flex size-[50px] items-center justify-center rounded-[5px] border border-[#3a3b3b] bg-[#2d2e2e]">
        <Chrome />
        <svg width="20" height="20" viewBox="0 0 20 20" className="absolute top-[3px] left-[25px]">
          <circle cx="10" cy="10" r="10" fill="#0a0b0d" />
          <path d="M6 5l4 1 4-2 2 4-1 5-4 3-4-2-1-5zM8 9l3 1 3-2" stroke="#2e4f56" fill="none" />
        </svg>
        <span className="absolute bottom-0 left-[14px] h-1 w-5 rounded-full bg-[#4cc2ff]" />
      </div>
      <Ico w={15} h={9} sw={2} className="ml-auto"><path d="M1 8l6.500-6.500L14 8" /></Ico>
      <div className="ml-[17px] w-[48px] pb-px text-center text-[14.500px] leading-5">
        <div>ENG</div><div>IN</div>
      </div>
      <Ico w={20} h={16} sw={1.5} className="ml-[13px]">
        <path d="M1 5.500a13 13 0 0 1 18 0M3.700 8.500a9 9 0 0 1 12.600 0M6.400 11.300a5.200 5.200 0 0 1 7.200 0" />
        <circle cx="10" cy="14" r="1.300" fill="currentColor" strokeWidth=".6" />
      </Ico>
      <Ico w={20} h={18} sw={1.5} className="ml-[10px]">
        <path d="M1 6.500h2.700L8 2.500v13l-4.300-4H1z" /><path d="M10.700 6.500a4 4 0 0 1 0 5M13.300 4a7.500 7.500 0 0 1 0 10" /><path d="M16 1.500a11 11 0 0 1 0 15" stroke="#666" />
      </Ico>
      <Ico w={20} h={14} sw={1.7} className="ml-[10px]">
        <rect x=".9" y="1" width="16" height="12" rx="2.500" /><rect x="3" y="3.200" width="4.500" height="7.600" fill="currentColor" stroke="none" /><path d="M18.700 5.500v3" strokeWidth="2.500" />
      </Ico>
      <div className="ml-[9px] w-[88px] pb-[3px] text-right text-[15px] leading-5">
        <div className="tracking-[-0.01em]!">11:25</div><div className="tracking-[-0.005em]!">06-08-2024</div>
      </div>
      <Ico w={16} h={18} sw={1.5} className="ml-[11px]">
        <path d="M8 1a5.500 5.500 0 0 0-5.500 5.500v4L1 14h14l-1.500-3.500v-4A5.500 5.500 0 0 0 8 1zM6 14.500a2 2 0 0 0 4 0" />
      </Ico>
      <div className="relative mr-[25px] ml-[23px] size-[29px]">
        <svg width="29" height="29" viewBox="0 0 29 29">
          <defs>
            <linearGradient id="cp1" x1="0" y1="0" x2="0" y2="1"><stop offset="0" stopColor="#2aa4f4" /><stop offset=".55" stopColor="#35b39b" /><stop offset="1" stopColor="#e8d12a" /></linearGradient>
            <linearGradient id="cp2" x1="0" y1="0" x2="0" y2="1"><stop offset="0" stopColor="#a45cf0" /><stop offset="1" stopColor="#f0708a" /></linearGradient>
          </defs>
          <path d="M14 0h5c2 0 3 2 4 6h-5l-3 3z" fill="#1746c9" />
          <path d="M7.500 0H18c-3 0-3.500 4-5 9.500C11.500 15 11 19 7 19H3.500C1 19 0 17 .6 14.500L4 3.500C4.800 1 5.800 0 7.500 0z" fill="url(#cp1)" />
          <path d="M18.500 6.500H25c2.500 0 3.500 2 3 4.500l-3 10H12c3 0 3.300-5 4.500-9.500.8-3 1-5 2-5z" fill="url(#cp2)" />
        </svg>
        <span className="absolute top-[19px] left-[6px] flex h-[10px] w-[24px] items-center justify-center rounded-[3px] bg-[#ffc70f] text-[8.5px] font-bold tracking-[0.05em]! text-[#1a1a1a]">PRE</span>
      </div>
    </div>
  );
}

export default function App() {
  return (
    <div className="flex h-[1080px] w-[1920px] flex-col overflow-hidden font-['Open_Sans',sans-serif] **:tracking-[-0.0125em]">
      <TabStrip />
      <UrlBar />
      <Bookmarks />
      <AppHeader />
      <div className="flex min-h-0 grow">
        <Sidebar />
        <Main />
      </div>
      <Taskbar />
    </div>
  );
}
